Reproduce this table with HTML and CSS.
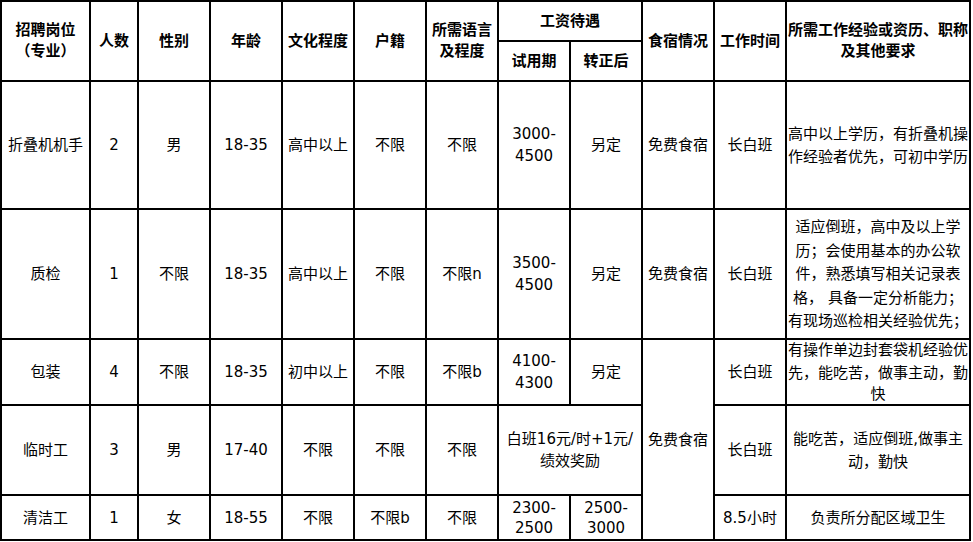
FILE: index.html
```html
<!DOCTYPE html>
<html lang="zh-CN">
<head>
<meta charset="utf-8">
<title>招聘岗位</title>
<link rel="stylesheet" href="styles.css">
</head>
<body>
<div class="grid">
  <div class="cell head span-r2">招聘岗位<br>（专业）</div>
  <div class="cell head span-r2">人数</div>
  <div class="cell head span-r2">性别</div>
  <div class="cell head span-r2">年龄</div>
  <div class="cell head span-r2">文化程度</div>
  <div class="cell head span-r2">户籍</div>
  <div class="cell head span-r2">所需语言<br>及程度</div>
  <div class="cell head span-c2">工资待遇</div>
  <div class="cell head span-r2">食宿情况</div>
  <div class="cell head span-r2">工作时间</div>
  <div class="cell head span-r2">所需工作经验或资历、职称<br>及其他要求</div>
  <div class="cell head">试用期</div>
  <div class="cell head">转正后</div>

  <div class="cell">折叠机机手</div>
  <div class="cell">2</div>
  <div class="cell">男</div>
  <div class="cell">18-35</div>
  <div class="cell">高中以上</div>
  <div class="cell">不限</div>
  <div class="cell">不限</div>
  <div class="cell">3000-<br>4500</div>
  <div class="cell">另定</div>
  <div class="cell">免费食宿</div>
  <div class="cell">长白班</div>
  <div class="cell"><span class="txt">高中以上学历<span class="pc">，</span>有折叠机操<br>作经验者优先<span class="pc">，</span>可初中学历</span></div>

  <div class="cell">质检</div>
  <div class="cell">1</div>
  <div class="cell">不限</div>
  <div class="cell">18-35</div>
  <div class="cell">高中以上</div>
  <div class="cell">不限</div>
  <div class="cell">不限n</div>
  <div class="cell">3500-<br>4500</div>
  <div class="cell">另定</div>
  <div class="cell">免费食宿</div>
  <div class="cell">长白班</div>
  <div class="cell dense"><span class="txt">适应倒班<span class="pc">，</span>高中及以上学<br>历<span class="pc">；</span>会使用基本的办公软<br>件<span class="pc">，</span>熟悉填写相关记录表<br>格<span class="pc">，</span> 具备一定分析能力<span class="pc">；</span><br>有现场巡检相关经验优先<span class="pc">；</span></span></div>

  <div class="cell">包装</div>
  <div class="cell">4</div>
  <div class="cell">不限</div>
  <div class="cell">18-35</div>
  <div class="cell">初中以上</div>
  <div class="cell">不限</div>
  <div class="cell">不限b</div>
  <div class="cell">4100-<br>4300</div>
  <div class="cell">另定</div>
  <div class="cell span-r3">免费食宿</div>
  <div class="cell">长白班</div>
  <div class="cell tight"><span class="txt">有操作单边封套袋机经验优<br>先<span class="pc">，</span>能吃苦<span class="pc">，</span>做事主动<span class="pc">，</span>勤<br>快</span></div>

  <div class="cell">临时工</div>
  <div class="cell">3</div>
  <div class="cell">男</div>
  <div class="cell">17-40</div>
  <div class="cell">不限</div>
  <div class="cell">不限</div>
  <div class="cell">不限</div>
  <div class="cell span-c2">白班16元/时+1元/<br>绩效奖励</div>
  <div class="cell">长白班</div>
  <div class="cell"><span class="txt">能吃苦<span class="pc">，</span>适应倒班,做事主<br>动<span class="pc">，</span>勤快</span></div>

  <div class="cell">清洁工</div>
  <div class="cell">1</div>
  <div class="cell">女</div>
  <div class="cell">18-55</div>
  <div class="cell">不限</div>
  <div class="cell">不限b</div>
  <div class="cell">不限</div>
  <div class="cell short">2300-<br>2500</div>
  <div class="cell short">2500-<br>3000</div>
  <div class="cell">8.5小时</div>
  <div class="cell">负责所分配区域卫生</div>
</div>
</body>
</html>
```

FILE: styles.css
```css
* {
  box-sizing: border-box;
}

html, body {
  margin: 0;
  padding: 0;
  background: #fff;
}

body {
  font-family: "DejaVu Sans", "Noto Sans CJK SC", sans-serif;
  font-size: 15px;
  color: #000;
}

.grid {
  display: grid;
  grid-template-columns: 89px 48px repeat(9, 72px) 184px;
  grid-template-rows: 40px 40px 128px 130px 66px 90px 45px;
  width: 971px;
  border-left: 2px solid #000;
  border-top: 2px solid #000;
}

.cell {
  display: flex;
  align-items: center;
  justify-content: center;
  text-align: center;
  border-right: 2px solid #000;
  border-bottom: 2px solid #000;
  line-height: 22px;
  overflow: hidden;
  white-space: nowrap;
}

.txt {
  display: block;
}

.head {
  font-weight: bold;
  line-height: 21px;
}

.pc {
  font-family: "Noto Sans CJK TC", "Noto Sans CJK SC", sans-serif;
}

.span-r2 {
  grid-row: span 2;
}

.span-r3 {
  grid-row: span 3;
}

.span-c2 {
  grid-column: span 2;
}

.dense {
  line-height: 21.5px;
}

.tight {
  line-height: 21px;
}

.short {
  line-height: 20px;
}
```
